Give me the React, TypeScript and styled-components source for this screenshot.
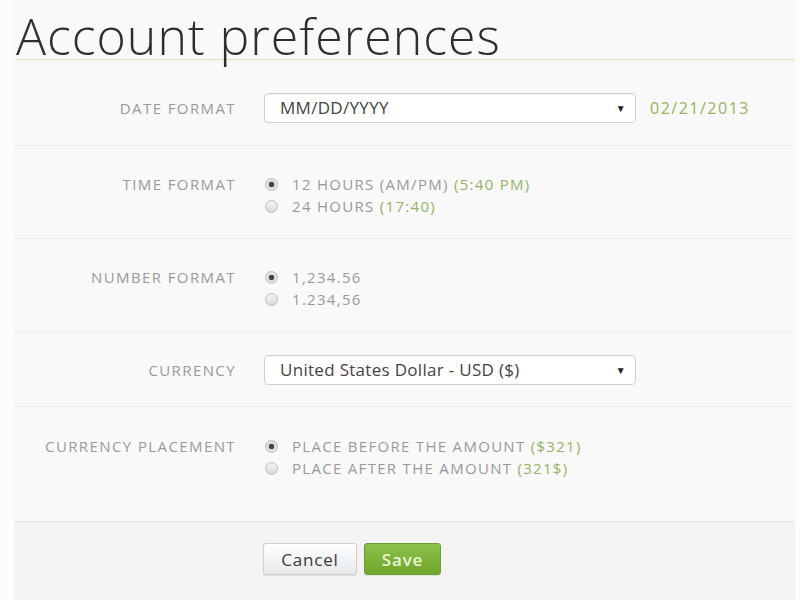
import styled, { createGlobalStyle } from 'styled-components';

const GlobalStyle = createGlobalStyle`
    html, body {
        margin: 0;
        padding: 0;
        background: #fcfcfc;
        font-family: 'Open Sans', 'Liberation Sans', sans-serif;
        overflow: hidden;
    }
`;

const Page = styled.div`
    margin: 0 5px 0 14px;
    background: #f9f9f9;
    height: 600px;
    overflow: hidden;
`;

const Title = styled.h1`
    margin: 0 0 0 2px;
    padding-top: 13px;
    font-size: 50px;
    line-height: 46px;
    font-weight: 300;
    color: #2e2e2e;
    letter-spacing: 1px;
    border-bottom: 1px solid #dfe0b8;
    white-space: nowrap;
`;

const Row = styled.div<{ $top: number; $bottom: number; $last?: boolean }>`
    display: flex;
    align-items: flex-start;
    gap: 28px;
    padding: ${(p) => p.$top}px 0 ${(p) => p.$bottom}px;
    border-bottom: ${(p) => (p.$last ? 'none' : '1px solid #ececec')};
`;

const Label = styled.div<{ $lh: number }>`
    width: 222px;
    flex: none;
    text-align: right;
    font-size: 15px;
    letter-spacing: 1.4px;
    line-height: ${(p) => p.$lh}px;
    color: #9a9a9a;
    text-transform: uppercase;
    white-space: nowrap;
`;

const Field = styled.div`
    display: flex;
    align-items: center;
    gap: 14px;
`;

const SelectBox = styled.div`
    position: relative;
    width: 372px;
    height: 30px;
    box-sizing: border-box;
    background: #fff;
    border: 1px solid #cfcfcf;
    border-radius: 4px;
    box-shadow: inset 0 1px 1px rgba(0, 0, 0, 0.04);
    padding-left: 15px;
    font-size: 17px;
    letter-spacing: 0.3px;
    line-height: 28px;
    color: #444;
`;

const Caret = styled.span`
    position: absolute;
    right: 9px;
    top: 0;
    font-size: 10px;
    line-height: 28px;
    color: #222;
`;

const Hint = styled.span`
    color: #93b45e;
`;

const DateHint = styled(Hint)`
    font-size: 16px;
    letter-spacing: 1.5px;
`;

const RadioList = styled.div`
    display: flex;
    flex-direction: column;
`;

const RadioLine = styled.div`
    display: flex;
    align-items: center;
    gap: 14px;
    height: 22px;
    font-size: 15px;
    letter-spacing: 1.3px;
    color: #999;
    padding-left: 1px;
    text-transform: uppercase;
    white-space: nowrap;
`;

const RadioDot = styled.span<{ $on?: boolean }>`
    width: 13px;
    height: 13px;
    box-sizing: border-box;
    border-radius: 50%;
    border: 1px solid #bdbdbd;
    background: ${(p) =>
        p.$on
            ? 'radial-gradient(circle, #444 0 2.5px, #d8d8d8 3px, #f2f2f2 100%)'
            : 'linear-gradient(#f4f4f4, #d9d9d9)'};
    flex: none;
`;

const Footer = styled.div`
    display: flex;
    gap: 7px;
    padding: 21px 0 30px 250px;
    background: #f3f3f3;
    border-top: 1px solid #e6e6e6;
    margin-left: -1px;
    min-height: 80px;
`;

const Button = styled.button<{ $primary?: boolean }>`
    height: 32px;
    border-radius: 3px;
    font-family: inherit;
    font-size: 17px;
    letter-spacing: 0.8px;
    padding: 0;
    cursor: pointer;
    font-weight: ${(p) => (p.$primary ? 600 : 400)};
    color: ${(p) => (p.$primary ? '#eaf5d4' : '#3a3a3a')};
    border: 1px solid ${(p) => (p.$primary ? '#6b9c2c' : '#cfcfcf')};
    background: ${(p) => (p.$primary ? 'linear-gradient(#8cc24a, #6fa52a)' : 'linear-gradient(#ffffff, #e9e9e9)')};
    box-shadow: 0 1px 1px rgba(0, 0, 0, 0.08);
    width: ${(p) => (p.$primary ? 77 : 94)}px;
`;

type Option = { text: string; hint?: string; on?: boolean };

const RadioGroup = ({ options }: { options: Option[] }) => (
    <RadioList>
        {options.map((o) => (
            <RadioLine key={o.text}>
                <RadioDot $on={o.on} />
                <span>
                    {o.text}
                    {o.hint && <Hint> {o.hint}</Hint>}
                </span>
            </RadioLine>
        ))}
    </RadioList>
);

export default function App() {
    return (
        <>
            <GlobalStyle />
            <Page>
                <Title>Account preferences</Title>
                <Row $top={33} $bottom={22}>
                    <Label $lh={30}>Date format</Label>
                    <Field>
                        <SelectBox>
                            MM/DD/YYYY
                            <Caret>▼</Caret>
                        </SelectBox>
                        <DateHint>02/21/2013</DateHint>
                    </Field>
                </Row>
                <Row $top={27} $bottom={21}>
                    <Label $lh={22}>Time format</Label>
                    <RadioGroup
                        options={[
                            { text: '12 hours (AM/PM)', hint: '(5:40 PM)', on: true },
                            { text: '24 hours', hint: '(17:40)' },
                        ]}
                    />
                </Row>
                <Row $top={27} $bottom={21}>
                    <Label $lh={22}>Number format</Label>
                    <RadioGroup options={[{ text: '1,234.56', on: true }, { text: '1.234,56' }]} />
                </Row>
                <Row $top={23} $bottom={21}>
                    <Label $lh={30}>Currency</Label>
                    <Field>
                        <SelectBox>
                            United States Dollar - USD ($)
                            <Caret>▼</Caret>
                        </SelectBox>
                    </Field>
                </Row>
                <Row $top={28} $bottom={42} $last>
                    <Label $lh={22}>Currency placement</Label>
                    <RadioGroup
                        options={[
                            { text: 'Place before the amount', hint: '($321)', on: true },
                            { text: 'Place after the amount', hint: '(321$)' },
                        ]}
                    />
                </Row>
                <Footer>
                    <Button>Cancel</Button>
                    <Button $primary>Save</Button>
                </Footer>
            </Page>
        </>
    );
}
